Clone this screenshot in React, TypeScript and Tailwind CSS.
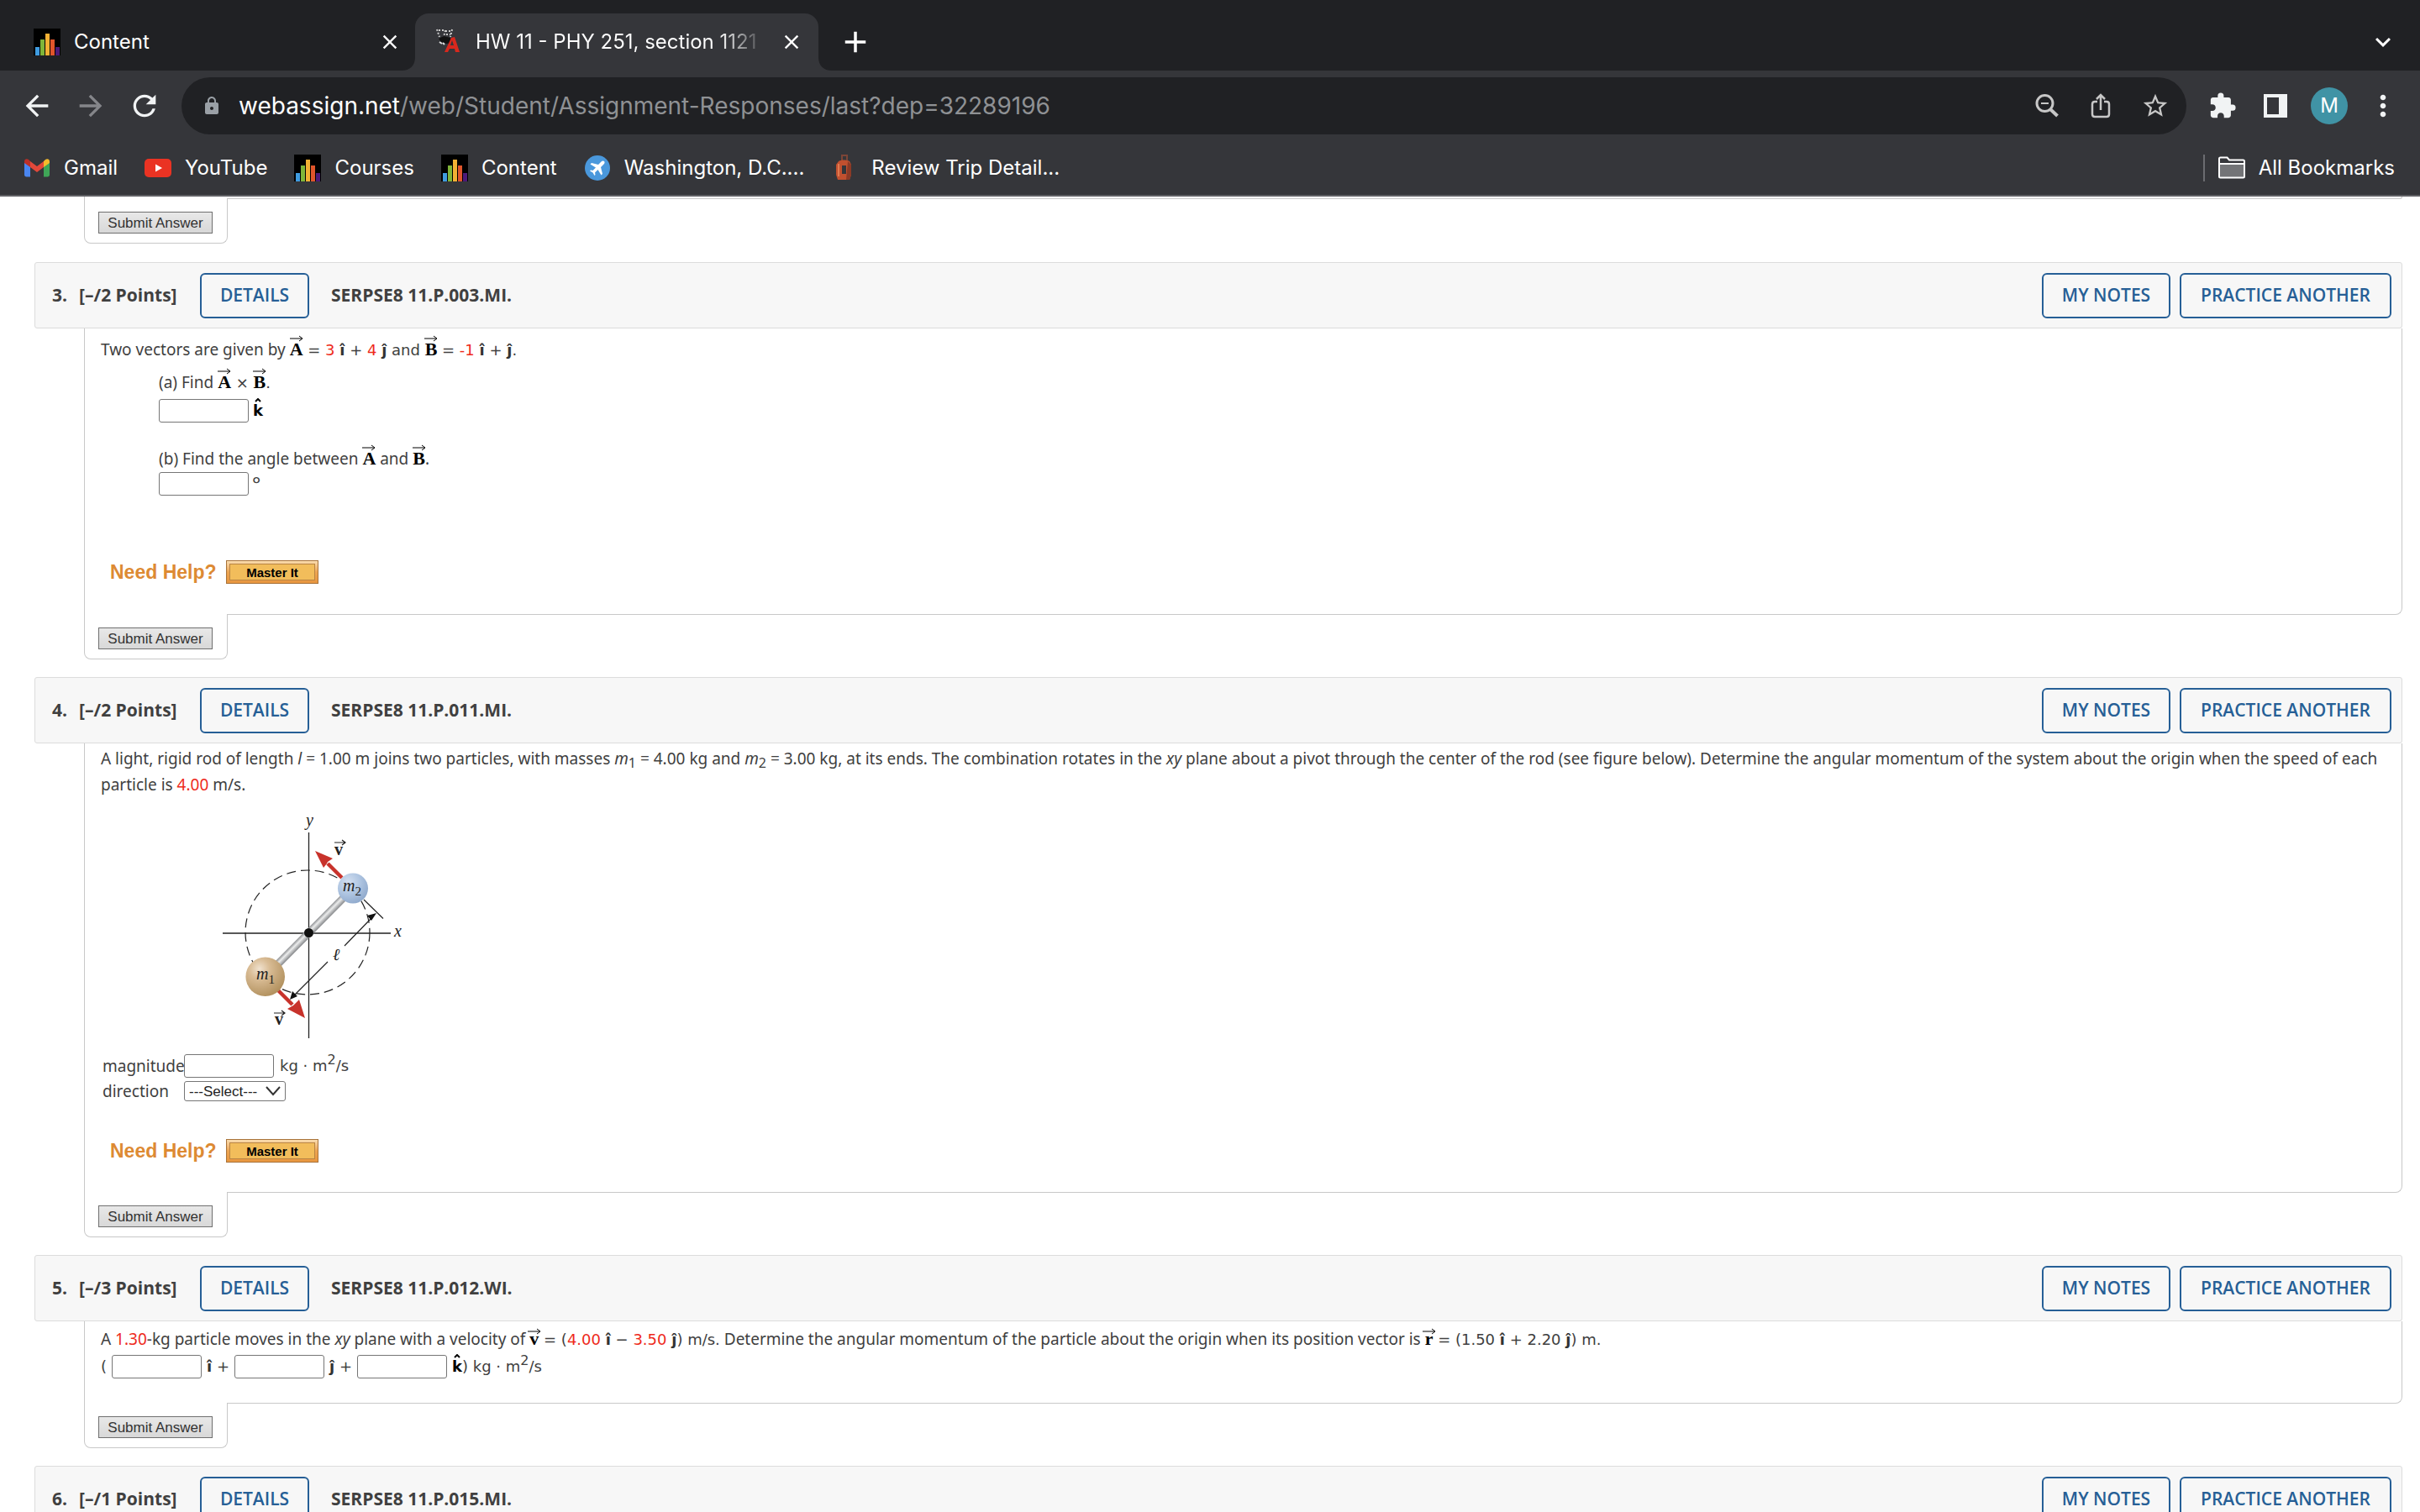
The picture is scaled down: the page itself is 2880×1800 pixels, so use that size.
import type { ReactNode } from 'react';
import {
  MdAdd,
  MdArrowBack,
  MdArrowForward,
  MdClose,
  MdExpandMore,
  MdExtension,
  MdLock,
  MdMoreVert,
  MdRefresh,
  MdStarBorder,
} from 'react-icons/md';

/* ---------- Browser icons ---------- */

function ChartIcon() {
  return (
    <svg viewBox="0 0 32 32" className="w-8 h-8 shrink-0">
      <rect width="32" height="32" fill="#000" />
      <rect x="2" y="22" width="5" height="10" fill="#3f9ce0" />
      <rect x="8" y="13" width="5" height="19" fill="#7fb539" />
      <rect x="14" y="6" width="5" height="26" fill="#f2b134" />
      <rect x="20" y="13" width="5" height="19" fill="#e0552b" />
      <rect x="26" y="22" width="5" height="10" fill="#4b1a78" />
    </svg>
  );
}

function WebAssignIcon() {
  return (
    <svg viewBox="0 0 32 32" className="w-8 h-8 shrink-0">
      <g fill="none" stroke="#c9c9c9" strokeWidth="2" strokeDasharray="2 2">
        <path d="M2 1l3 9M4 2h6M12 2l-2 8M12 3h6M13 7h5M20 1l-2 9" />
      </g>
      <path d="M4 12l6-3 8 2 1 6-6 1-6-2z" fill="#111" />
      <path d="M5 16l3 2M9 17l2 2" stroke="#ddd" strokeWidth="2" />
      <path d="M11 28l8-17 4-1 6 18h-5l-1-4h-6l-2 4zM18 20h4l-2-6z" fill="#d8281d" fillRule="evenodd" />
    </svg>
  );
}

function GmailIcon() {
  return (
    <svg viewBox="0 0 32 32" className="w-8 h-8 shrink-0">
      <path d="M1 9v15c0 1.500 1 2.500 2.500 2.500H8V14z" fill="#4a86f0" />
      <path d="M24 14v12.500h4.500c1.500 0 2.500-1 2.500-2.500V9z" fill="#3fa657" />
      <path d="M24 8v7l7-5V8.500C31 5 28 4.500 26 6z" fill="#f5bb2c" />
      <path d="M8 8l8 6 8-6v7l-8 6-8-6z" fill="#e2483a" />
      <path d="M8 8v7l-7-5V8.500C1 5 4 4.500 6 6z" fill="#bd2f26" />
    </svg>
  );
}

function YouTubeIcon() {
  return (
    <svg viewBox="0 0 32 32" className="w-8 h-8 shrink-0">
      <rect y="5" width="32" height="22" rx="5" fill="#ea3323" />
      <path d="M13 11.500v9l8-4.500z" fill="#fff" />
    </svg>
  );
}

function PlaneIcon() {
  return (
    <svg viewBox="0 0 32 32" className="w-8 h-8 shrink-0">
      <circle cx="16" cy="16" r="15" fill="#4a98dc" />
      <path
        d="M24 8c-1-1-2.500-.5-3.500.5L17 12 9 10l-1.500 1.500 6.500 4-3.500 3.500-2.500-.5L7 19.500l3.500 2L12.500 25l1-1-.5-2.500 3.500-3.500 4 6.500L22 23l-2-8 3.500-3.500C24.500 10.500 25 9 24 8z"
        fill="#fff"
      />
    </svg>
  );
}

function LuggageIcon() {
  return (
    <svg viewBox="0 0 32 32" className="w-8 h-8 shrink-0">
      <path d="M13 7V1h6v6" fill="none" stroke="#7c4537" strokeWidth="2" />
      <path d="M9 8c3-2 9-2 13 0l2 4v12l-2 6H8l-2-6V12z" fill="#c1502f" />
      <path d="M20 8l4 4v12l-2 6h-4z" fill="#8c3a26" />
      <path d="M13 13h5v10h-5z" fill="#35363a" />
      <path d="M9 11v15" stroke="#e07a50" strokeWidth="2" />
    </svg>
  );
}

function ZoomOutIcon() {
  return (
    <svg viewBox="0 0 32 32" className="w-8 h-8" fill="none" stroke="#c7c7c7" strokeWidth="3">
      <circle cx="13.500" cy="13" r="9.500" />
      <path d="M9 13h9" strokeWidth="2" />
      <path d="M20 20l8.500 8" strokeWidth="4" />
    </svg>
  );
}

function ShareIcon() {
  return (
    <svg viewBox="0 0 32 32" className="w-8 h-8" fill="none" stroke="#c7c7c7" strokeWidth="2.500">
      <path d="M12 11H9c-2 0-3 1-3 3v12c0 2 1 3 3 3h14c2 0 3-1 3-3V14c0-2-1-3-3-3h-3" />
      <path d="M16 21V4M11 8l5-5 5 5" />
    </svg>
  );
}

function SidePanelIcon() {
  return (
    <svg viewBox="0 0 32 32" className="w-8 h-8">
      <path d="M2 2h28v28H2zM6 6v20h14V6z" fill="#f1f3f4" fillRule="evenodd" />
    </svg>
  );
}

function FolderIcon() {
  return (
    <svg viewBox="0 0 32 32" className="w-8 h-8">
      <path d="M1 11h30v16H1z" fill="#737477" />
      <path d="M1 5c0-1 .5-1.500 1.500-1.500h8L13 6.500h16.500c1 0 1.500.5 1.500 1.500v18c0 1-.5 1.500-1.500 1.500h-27C1.500 27.500 1 27 1 26zM1 11h30" fill="none" stroke="#fff" strokeWidth="2" />
    </svg>
  );
}

/* ---------- Browser chrome ---------- */

const bookmarks = [
  { label: 'Gmail', icon: <GmailIcon /> },
  { label: 'YouTube', icon: <YouTubeIcon /> },
  { label: 'Courses', icon: <ChartIcon /> },
  { label: 'Content', icon: <ChartIcon /> },
  { label: 'Washington, D.C....', icon: <PlaneIcon /> },
  { label: 'Review Trip Detail...', icon: <LuggageIcon /> },
];

function TabStrip() {
  return (
    <div className="h-[84px] flex items-end bg-[#202124]">
      <div className="w-[494px] h-[68px] pl-10 pr-4 flex items-center">
        <ChartIcon />
        <span className="ml-4 flex-1">Content</span>
        <button aria-label="Close tab" className="w-7 h-7 flex items-center justify-center">
          <MdClose size={28} />
        </button>
      </div>
      <svg viewBox="0 0 16 16" className="w-4 h-4 -ml-4">
        <path d="M16 0v16H0C10 16 16 10 16 0z" fill="#35363a" />
      </svg>
      <div className="w-[480px] h-[68px] pl-6 pr-[18px] flex items-center rounded-t-2xl bg-[#35363a]">
        <WebAssignIcon />
        <span className="ml-4 mr-[22px] flex-1 overflow-hidden whitespace-nowrap bg-clip-text text-transparent bg-linear-to-r from-white from-85% to-white/10">
          HW 11 - PHY 251, section 1121
        </span>
        <button aria-label="Close tab" className="w-7 h-7 flex items-center justify-center">
          <MdClose size={28} />
        </button>
      </div>
      <svg viewBox="0 0 16 16" className="w-4 h-4">
        <path d="M0 0v16h16C6 16 0 10 0 0z" fill="#35363a" />
      </svg>
      <button aria-label="New tab" className="w-14 h-[68px] flex items-center justify-center">
        <MdAdd size={42} />
      </button>
      <button aria-label="Search tabs" className="ml-auto mr-[26px] h-[68px] flex items-center">
        <MdExpandMore size={36} />
      </button>
    </div>
  );
}

function Toolbar() {
  return (
    <div className="h-[84px] pl-6 pr-6 flex items-center">
      <div className="flex items-center gap-6 text-[#f1f3f4]">
        <button aria-label="Back"><MdArrowBack size={40} /></button>
        <button aria-label="Forward" className="text-[#85868a]"><MdArrowForward size={40} /></button>
        <button aria-label="Reload"><MdRefresh size={40} /></button>
      </div>
      <div className="ml-6 flex-1 h-[68px] pl-6 pr-5 flex items-center rounded-full bg-[#202124] text-[#9aa0a6]">
        <MdLock size={24} />
        <p className="ml-5 flex-1 text-[28px] text-[#8f9194]">
          <span className="text-white">webassign.net</span>/web/Student/Assignment-Responses/last?dep=32289196
        </p>
        <div className="flex items-center gap-8 text-[#c7c7c7]">
          <button aria-label="Zoom"><ZoomOutIcon /></button>
          <button aria-label="Share"><ShareIcon /></button>
          <button aria-label="Bookmark this page"><MdStarBorder size={34} /></button>
        </div>
      </div>
      <div className="ml-[26px] flex items-center text-[#f1f3f4]">
        <button aria-label="Extensions"><MdExtension size={34} /></button>
        <button aria-label="Side panel" className="ml-[30px]"><SidePanelIcon /></button>
        <button aria-label="Profile" className="ml-[26px] w-11 h-11 rounded-full bg-[#4093a5] text-white">M</button>
        <button aria-label="Menu" className="ml-[22px]"><MdMoreVert size={40} /></button>
      </div>
    </div>
  );
}

function BookmarksBar() {
  return (
    <div className="h-16 pl-7 pr-[30px] flex items-center">
      <nav className="flex items-center gap-8">
        {bookmarks.map((item) => (
          <a key={item.label} href="#" className="flex items-center gap-4 whitespace-nowrap">
            {item.icon}
            {item.label}
          </a>
        ))}
      </nav>
      <a href="#" className="ml-auto h-8 pl-4 flex items-center gap-4 border-l-2 border-[#6b6c70]">
        <FolderIcon />
        All Bookmarks
      </a>
    </div>
  );
}

/* ---------- Maths notation ---------- */

function MathText({ children }: { children: ReactNode }) {
  return <span className="font-['DejaVu_Sans',sans-serif] text-[18px]">{children}</span>;
}

function Arrow() {
  return (
    <svg viewBox="0 0 16 8" className="w-4 h-2" fill="none" stroke="#000">
      <path d="M0 4h15M11 1l4 3-4 3" />
    </svg>
  );
}

// Lowercase letters carry their arrow lower than capitals do
function Vec({ children, small }: { children: ReactNode; small?: boolean }) {
  return (
    <span className="relative inline-block font-['Liberation_Serif',serif] font-bold text-[22px] leading-none text-black">
      {children}
      <span className={`absolute left-1/2 -translate-x-1/2 ${small ? '-top-0.5' : '-top-1.5'}`}>
        <Arrow />
      </span>
    </span>
  );
}

function Hat({ children }: { children: ReactNode }) {
  return <b className="text-[#333]">{children}</b>;
}

function KHat() {
  return (
    <b className="relative inline-block font-['DejaVu_Sans',sans-serif] text-[18px] leading-none text-black">
      k
      <svg viewBox="0 0 8 5" className="absolute -top-1.5 left-0.5 w-2 h-[5px]" fill="none" stroke="#000" strokeWidth="2">
        <path d="M1 4l3-3 3 3" />
      </svg>
    </b>
  );
}

function Red({ children }: { children: ReactNode }) {
  return <span className="text-[#ee2a1c]">{children}</span>;
}

function Sup({ children }: { children: ReactNode }) {
  return <sup className="text-[16px]">{children}</sup>;
}

function Sub({ children }: { children: ReactNode }) {
  return <sub className="text-[16px]">{children}</sub>;
}

function Answer({ label, id }: { label: string; id?: string }) {
  return (
    <input id={id} type="text" aria-label={label} className="w-[107px] h-7 shrink-0 border border-[#767676] rounded-[3px] bg-white px-1" />
  );
}

/* ---------- Question parts ---------- */

function NeedHelp() {
  return (
    <div className="pl-[11px] flex items-center font-['Liberation_Sans',sans-serif] font-bold">
      <span className="w-[138px] text-[23px] leading-7 text-[#dd8a33]">Need Help?</span>
      <button className="w-[110px] h-7 p-[3px] border border-[#a8733a] bg-linear-to-b from-[#f9dcae] via-[#eda552] to-[#e8963f]">
        <span className="h-full flex items-center justify-center border border-[#b98544] bg-[#f2bd5b] text-[15px] leading-none text-black">
          Master It
        </span>
      </button>
    </div>
  );
}

function SubmitTab() {
  return (
    <div className="relative -mt-px w-[171px] h-[54px] pl-4 pt-4 border border-t-0 border-[#c8c8c8] rounded-b-lg bg-white">
      <button className="block w-[136px] h-[26px] border border-[#6f6f6f] bg-linear-to-b from-[#e8e8e8] to-[#d8d8d8] font-['Liberation_Sans',sans-serif] text-[17px] leading-none text-[#333]">
        Submit Answer
      </button>
    </div>
  );
}

type QuestionProps = {
  number: number;
  points: number;
  code: string;
  children?: ReactNode;
};

function Question({ number, points, code, children }: QuestionProps) {
  return (
    <section className="mb-[21px]">
      <header className="h-[79px] pl-5 pr-3 flex items-center border border-[#dcdcdc] rounded-[3px] bg-[#f7f7f7] font-['Open_Sans',sans-serif] text-[21px] font-bold text-[#404040]">
        <span className="w-8">{number}.</span>
        <span className="w-36">[–/{points} Points]</span>
        <button className="w-[130px] h-[54px] border-2 border-[#265f96] rounded-md font-semibold text-[#265f96]">DETAILS</button>
        <h2 className="ml-[26px] flex-1">{code}</h2>
        <div className="flex gap-[11px] font-semibold text-[#265f96]">
          <button className="w-[153px] h-[54px] border-2 border-[#265f96] rounded-md">MY NOTES</button>
          <button className="w-[252px] h-[54px] border-2 border-[#265f96] rounded-md">PRACTICE ANOTHER</button>
        </div>
      </header>
      <div className="ml-[59px]">
        <div className="pl-[19px] pr-5 border border-t-0 border-[#c8c8c8] rounded-br-lg">{children}</div>
        <SubmitTab />
      </div>
    </section>
  );
}

function RodFigure() {
  return (
    <svg viewBox="0 1 280 300" className="ml-[100px] w-[280px] h-[300px]" fill="none">
      <defs>
        <radialGradient id="blueBall" cx="35%" cy="30%" r="75%">
          <stop offset="0" stopColor="#d3dff0" />
          <stop offset="0.5" stopColor="#b0c6e2" />
          <stop offset="1" stopColor="#8fa9cc" />
        </radialGradient>
        <radialGradient id="tanBall" cx="35%" cy="30%" r="75%">
          <stop offset="0" stopColor="#f0e2cf" />
          <stop offset="0.35" stopColor="#d9bc95" />
          <stop offset="1" stopColor="#b08f5c" />
        </radialGradient>
        <linearGradient id="rod" x1="0" y1="0" x2="0" y2="1">
          <stop offset="0" stopColor="#8d8f92" />
          <stop offset="0.4" stopColor="#eceded" />
          <stop offset="1" stopColor="#85878a" />
        </linearGradient>
      </defs>

      <circle cx="146" cy="161" r="74" stroke="#222" strokeWidth="1.200" strokeDasharray="11 6" />
      <path d="M147.500 42v245M45 162h200" stroke="#222" strokeWidth="1.300" />

      {/* Rod between the two particles */}
      <g transform="translate(147.500 161.500) rotate(-45.300)">
        <rect x="-58" y="-4.500" width="118" height="9" fill="url(#rod)" />
      </g>
      <circle cx="147.500" cy="161.500" r="5.500" fill="#111" />

      {/* Velocity arrows */}
      <path d="M187 96l-17-17M111 230l17 17" stroke="#c8322b" strokeWidth="4.500" />
      <path d="M155 64l21 9-6 4-1 2-4 5zM143 263l-21-11 7-4 2-2 5-5z" fill="#c8322b" />

      <circle cx="200" cy="108.500" r="18" fill="url(#blueBall)" />
      <circle cx="95.700" cy="213.700" r="23.300" fill="url(#tanBall)" />

      {/* Length marker */}
      <path d="M213 122l23 22.500M190 177l32-33M170 196l-40 40" stroke="#222" strokeWidth="1.200" />
      <path d="M228 138l-11 3 5 6zM125 241l3-10 6 6z" fill="#111" />

      <g fill="#222" className="font-['Liberation_Serif',serif]" fontSize="20">
        <text x="144" y="34" fontStyle="italic">y</text>
        <text x="249" y="166" fontStyle="italic">x</text>
        <text x="188" y="112" fontStyle="italic">m<tspan dy="5" fontSize="15" fontStyle="normal">2</tspan></text>
        <text x="85" y="217" fontStyle="italic">m<tspan dy="5" fontSize="15" fontStyle="normal">1</tspan></text>
        <text x="176" y="194" fontStyle="italic">ℓ</text>
        <text x="178" y="69" fontWeight="bold">v</text>
        <text x="107" y="271" fontWeight="bold">v</text>
      </g>
      <path d="M178 54h12M187 51l4 3-4 3M106 257h12M115 254l4 3-4 3" stroke="#222" strokeWidth="1.200" />
    </svg>
  );
}

/* ---------- Page ---------- */

export default function App() {
  return (
    <div className="h-screen flex flex-col overflow-hidden bg-white">
      <div className="shrink-0 border-b-2 border-[#5f6064] bg-[#35363a] font-['Inter',sans-serif] text-[24px] text-white">
        <TabStrip />
        <Toolbar />
        <BookmarksBar />
      </div>

      <main className="flex-1 min-h-0 overflow-hidden pl-[41px] pr-[21px] font-['Noto_Sans',sans-serif] text-[19px] leading-[31px] text-[#404040]">
        <div className="ml-[59px] mb-[22px]">
          <div className="h-[3px] border border-t-0 border-[#c8c8c8] rounded-br-lg" />
          <SubmitTab />
        </div>

        <Question number={3} points={2} code="SERPSE8 11.P.003.MI.">
          <p className="pt-2.5">
            Two vectors are given by <MathText><Vec>A</Vec> = <Red>3</Red> <Hat>î</Hat> + <Red>4</Red> <Hat>ĵ</Hat> and <Vec>B</Vec> = <Red>-1</Red> <Hat>î</Hat> + <Hat>ĵ</Hat>.</MathText>
          </p>
          <div className="pl-[69px]">
            <p className="pt-2">
              (a) Find <MathText><Vec>A</Vec> × <Vec>B</Vec>.</MathText>
            </p>
            <div className="pt-1 flex items-center gap-[5px]">
              <Answer label="Part a" />
              <KHat />
            </div>
            <p className="pt-7">
              (b) Find the angle between <Vec>A</Vec> and <Vec>B</Vec>.
            </p>
            <div className="flex items-center gap-1 leading-7">
              <Answer label="Part b, degrees" />
              <span className="text-[24px]">°</span>
            </div>
          </div>
          <div className="pt-[77px] pb-9">
            <NeedHelp />
          </div>
        </Question>

        <Question number={4} points={2} code="SERPSE8 11.P.011.MI.">
          <p className="pt-[3px]">
            A light, rigid rod of length <i>l</i> = 1.00 m joins two particles, with masses <i>m</i><Sub>1</Sub> = 4.00 kg and <i>m</i><Sub>2</Sub> = 3.00 kg, at its ends. The combination rotates in the <i>xy</i> plane about a pivot through the center of the rod (see figure below). Determine the angular momentum of the system about the origin when the speed of each particle is <Red>4.00</Red> m/s.
          </p>
          <RodFigure />
          <div className="pl-0.5 pt-1 flex items-center">
            <label htmlFor="magnitude" className="w-[97px] leading-7">magnitude</label>
            <Answer id="magnitude" label="magnitude" />
            <span className="ml-[7px] leading-7"><MathText>kg · m<Sup>2</Sup>/s</MathText></span>
          </div>
          <div className="pl-0.5 pt-1 flex items-center">
            <label htmlFor="direction" className="w-[97px] leading-6">direction</label>
            <div className="relative">
              <select id="direction" className="block appearance-none w-[121px] h-6 pl-[5px] border border-[#767676] rounded-[3px] bg-white font-['Liberation_Sans',sans-serif] text-[17px] leading-none text-[#222]">
                <option>---Select---</option>
              </select>
              <svg viewBox="0 0 18 12" className="absolute right-1.5 top-1.5 w-[18px] h-3 pointer-events-none" fill="none" stroke="#333" strokeWidth="2">
                <path d="M1 1l8 9 8-9" />
              </svg>
            </div>
          </div>
          <div className="pt-[45px] pb-[35px]">
            <NeedHelp />
          </div>
        </Question>

        <Question number={5} points={3} code="SERPSE8 11.P.012.WI.">
          <p className="pt-1.5">
            A <Red>1.30</Red>-kg particle moves in the <i>xy</i> plane with a velocity of <MathText><Vec small>v</Vec> = (<Red>4.00</Red> <Hat>î</Hat> − <Red>3.50</Red> <Hat>ĵ</Hat>) m/s.</MathText> Determine the angular momentum of the particle about the origin when its position vector is <MathText><Vec small>r</Vec> = (1.50 <Hat>î</Hat> + 2.20 <Hat>ĵ</Hat>) m.</MathText>
          </p>
          <div className="pt-[3px] pb-[29px] flex items-center gap-1.5 leading-7">
            <MathText>(</MathText>
            <Answer label="i component" />
            <MathText><Hat>î</Hat> +</MathText>
            <Answer label="j component" />
            <MathText><Hat>ĵ</Hat> +</MathText>
            <Answer label="k component" />
            <MathText><KHat />) kg · m<Sup>2</Sup>/s</MathText>
          </div>
        </Question>

        <Question number={6} points={1} code="SERPSE8 11.P.015.MI." />
      </main>
    </div>
  );
}
